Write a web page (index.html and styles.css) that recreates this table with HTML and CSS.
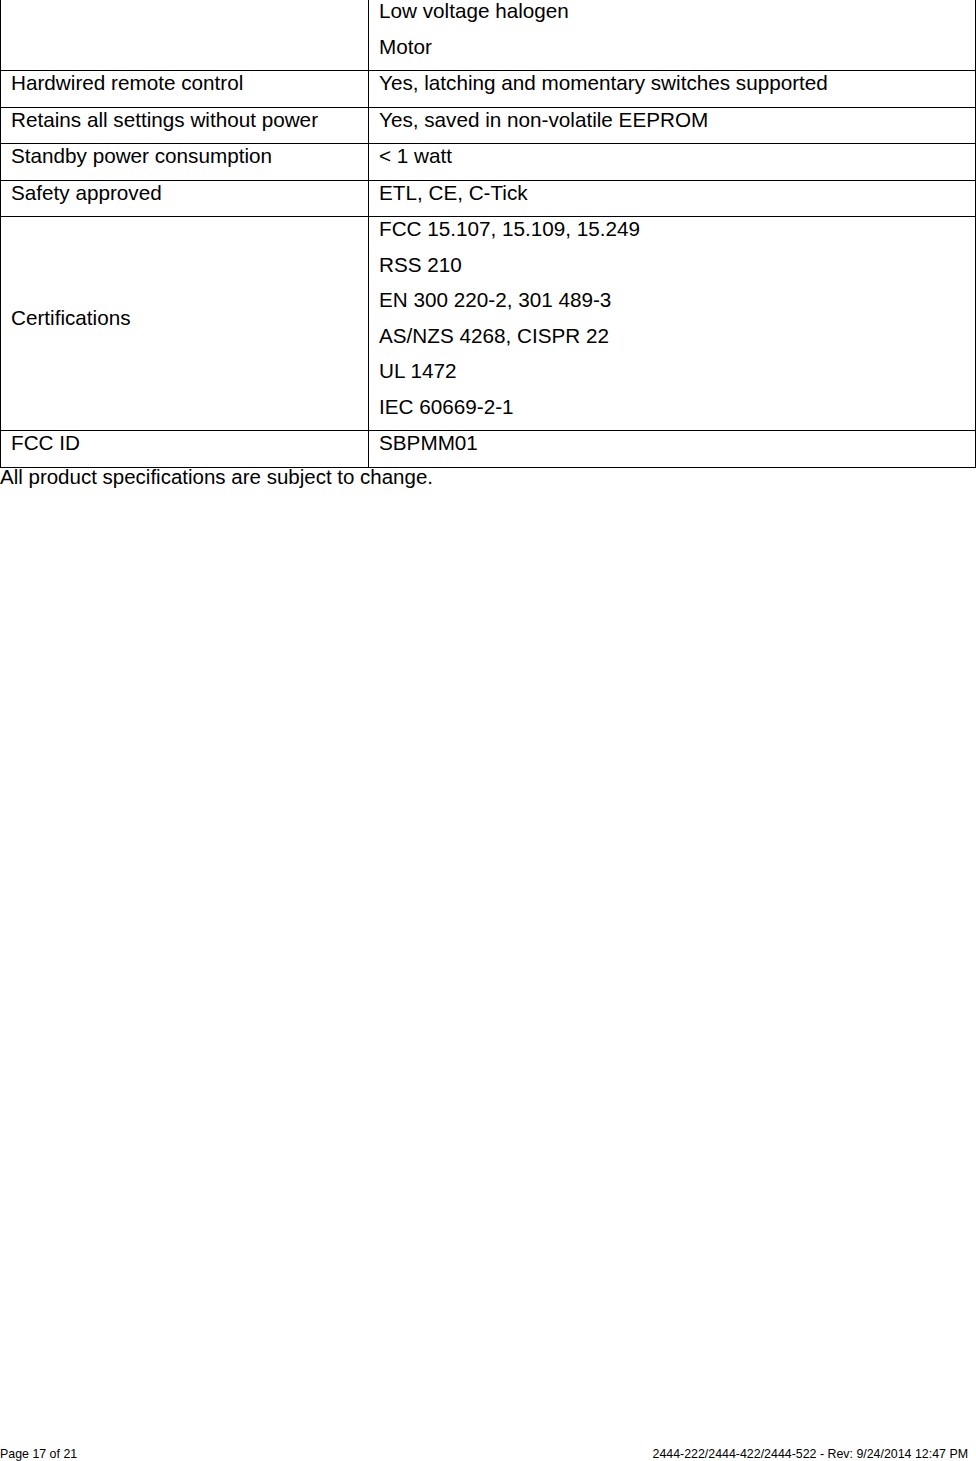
FILE: index.html
```html
<!DOCTYPE html>
<html>
<head>
<meta charset="utf-8">
<link rel="stylesheet" href="styles.css">
</head>
<body>
<div class="page">
  <table class="spec">
    <tr class="cont">
      <td class="label"></td>
      <td class="value"><p>Low voltage halogen</p><p>Motor</p></td>
    </tr>
    <tr>
      <td class="label"><p>Hardwired remote control</p></td>
      <td class="value"><p>Yes, latching and momentary switches supported</p></td>
    </tr>
    <tr>
      <td class="label"><p>Retains all settings without power</p></td>
      <td class="value"><p>Yes, saved in non-volatile EEPROM</p></td>
    </tr>
    <tr>
      <td class="label"><p>Standby power consumption</p></td>
      <td class="value"><p>&lt; 1 watt</p></td>
    </tr>
    <tr>
      <td class="label"><p>Safety approved</p></td>
      <td class="value"><p>ETL, CE, C-Tick</p></td>
    </tr>
    <tr>
      <td class="label middle"><p>Certifications</p></td>
      <td class="value">
        <p>FCC 15.107, 15.109, 15.249</p>
        <p>RSS 210</p>
        <p>EN 300 220-2, 301 489-3</p>
        <p>AS/NZS 4268, CISPR 22</p>
        <p>UL 1472</p>
        <p>IEC 60669-2-1</p>
      </td>
    </tr>
    <tr>
      <td class="label"><p>FCC ID</p></td>
      <td class="value"><p>SBPMM01</p></td>
    </tr>
  </table>
  <p class="note">All product specifications are subject to change.</p>
  <div class="footer">
    <span>Page 17 of 21</span>
    <span>2444-222/2444-422/2444-522 - Rev: 9/24/2014 12:47 PM</span>
  </div>
</div>
</body>
</html>
```
FILE: styles.css
```css
html, body {
  margin: 0;
  padding: 0;
  background: #fff;
}

.page {
  width: 976px;
  height: 1461px;
  display: flex;
  flex-direction: column;
  font-family: "Liberation Sans", Arial, sans-serif;
  color: #000;
  overflow: hidden;
}

.spec {
  width: 976px;
  border-collapse: collapse;
  margin-top: -1px;
  font-size: 20.7px;
  table-layout: fixed;
}

.spec td {
  border: 1px solid #000;
  padding: 0 10px;
  vertical-align: top;
}

.spec tr.cont td {
  border-top: none;
}

.spec td.label {
  width: 347px;
}

.spec td.middle {
  vertical-align: middle;
}

.spec p {
  margin: 0 0 12px 0;
  line-height: 23.5px;
}

.note {
  margin: 0;
  font-size: 20.5px;
  line-height: 18px;
}

.footer {
  margin-top: auto;
  display: flex;
  justify-content: space-between;
  padding-right: 8px;
  font-size: 12.4px;
  line-height: 14.25px;
}
```
